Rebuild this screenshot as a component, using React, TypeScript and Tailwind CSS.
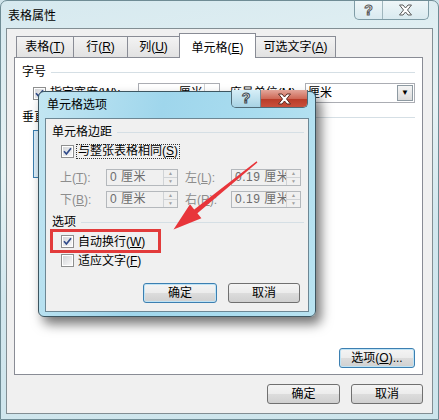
import React from "react";

function M({ c }: { c: string }) {
  return (
    <span>
      (<span className="underline underline-offset-1">{c}</span>)
    </span>
  );
}

function Check({ on }: { on?: boolean }) {
  return (
    <span className="w-[13px] h-[13px] shrink-0 border border-[#8e8f8f] bg-white p-px flex">
      <span className="flex-1 flex items-center justify-center bg-[linear-gradient(135deg,#d4d6d9,#f8f8f8)]">
        {on && (
          <svg width="9" height="9" viewBox="0 0 9 9">
            <path d="M1 4.3 L3.4 7 L8 1.2" stroke="#2f4a8a" strokeWidth="1.7" fill="none" />
          </svg>
        )}
      </span>
    </span>
  );
}

function Btn({ children, className }: { children: React.ReactNode; className: string }) {
  return (
    <div
      className={
        "h-[20px] rounded-[3px] border flex items-center justify-center bg-[linear-gradient(180deg,#f4f4f4_0%,#ececec_48%,#dcdcdc_52%,#d0d0d0_100%)] " +
        className
      }
    >
      {children}
    </div>
  );
}

function Spin({ value, className }: { value: string; className: string }) {
  return (
    <div className={"h-[17px] flex border border-[#b4b8bc] bg-[#f0f0f0] text-[#6d6d6d] " + className}>
      <span className="flex-1 min-w-0 pl-[3px] leading-[15px] tracking-[0.5px] whitespace-nowrap overflow-hidden">{value}</span>
      <span className="w-[14px] shrink-0 flex flex-col border-l border-[#d0d3d6]">
        <span className="flex-1 flex items-center justify-center text-[5px] leading-none text-[#a0a0a0] border-b border-[#d0d3d6]">▲</span>
        <span className="flex-1 flex items-center justify-center text-[5px] leading-none text-[#a0a0a0]">▼</span>
      </span>
    </div>
  );
}

function Header({ label, className }: { label: string; className: string }) {
  return (
    <div className={"h-[14px] flex items-center gap-[5px] leading-[14px] " + className}>
      <span>{label}</span>
      <span className="flex-1 h-px bg-[#d5dfe5]" />
    </div>
  );
}

function XGlyph({ fill, stroke }: { fill: string; stroke: string }) {
  return (
    <svg width="15" height="12" viewBox="0 0 15 12">
      <path
        d="M1.5 1 H5 L7.5 4 L10 1 H13.5 L9.5 6 L13.5 11 H10 L7.5 8 L5 11 H1.5 L5.5 6 Z"
        fill={fill}
        stroke={stroke}
        strokeWidth="1"
        strokeLinejoin="round"
      />
    </svg>
  );
}

export default function App() {
  return (
    <div className="relative w-[439px] h-[420px] overflow-hidden bg-[#cfe3ea] text-[12px] text-black font-['Liberation_Sans','Noto_Sans_CJK_SC',sans-serif]">
      {/* outer window */}
      <div className="h-full flex flex-col rounded-t-[7px] border border-[#6f8c95] bg-[linear-gradient(170deg,#d6e9ef_0%,#e6f2f4_35%,#d2e7ee_60%,#cde5ec_100%)] px-[5px] pb-[5px]">
        <div className="h-[27px] flex items-start justify-between">
          <span className="pl-[2px] pt-[8px] leading-[14px]">表格属性</span>
          <div className="mr-[4px] flex h-[19px] rounded-b-[5px] border border-t-0 border-[#7f9ca6] bg-[linear-gradient(180deg,#eef6f8,#d9eaef)] overflow-hidden">
            <div className="w-[28px] flex items-center justify-center border-r border-[#9fb6bd] text-[14px] font-bold text-white [-webkit-text-stroke:1px_#5a5a5a]">?</div>
            <div className="w-[45px] flex items-center justify-center">
              <XGlyph fill="#ffffff" stroke="#5a5a5a" />
            </div>
          </div>
        </div>

        {/* client */}
        <div className="flex-1 flex flex-col bg-[#f0f0f0] border border-[#828e93]">
          {/* tabs */}
          <div className="h-[28px] pl-[9px] flex items-end">
            <div className="w-[58px] h-[21px] border border-b-0 border-[#898c95] bg-[linear-gradient(180deg,#f3f3f3,#e2e2e2)] flex items-center justify-center">表格<M c="T" /></div>
            <div className="w-[55px] h-[21px] -ml-px border border-b-0 border-[#898c95] bg-[linear-gradient(180deg,#f3f3f3,#e2e2e2)] flex items-center justify-center">行<M c="R" /></div>
            <div className="w-[53px] h-[21px] -ml-px border border-b-0 border-[#898c95] bg-[linear-gradient(180deg,#f3f3f3,#e2e2e2)] flex items-center justify-center">列<M c="U" /></div>
            <div className="relative z-10 w-[77px] h-[25px] -ml-px -mb-px border border-b-0 border-[#898c95] bg-white flex items-start pt-[5px] justify-center">单元格<M c="E" /></div>
            <div className="w-[81px] h-[21px] -ml-px border border-b-0 border-[#898c95] bg-[linear-gradient(180deg,#f3f3f3,#e2e2e2)] flex items-center justify-center">可选文字<M c="A" /></div>
          </div>

          {/* panel */}
          <div className="ml-[7px] w-[409px] h-[318px] border border-[#898c95] bg-white flex flex-col">
            <Header label="字号" className="mt-[7px] ml-[7px] mr-[7px]" />
            <div className="mt-[4px] h-[20px] flex items-center">
              <span className="ml-[18px]"><Check on /></span>
              <span className="ml-[4px]">指定宽度<M c="W" />:</span>
              <div className="ml-[17px] w-[82px] h-[20px] flex border border-[#abadb3]">
                <span className="flex-1 pl-[40px] leading-[18px]">厘米</span>
                <span className="w-[15px] border-l border-[#d0d3d6]" />
              </div>
              <span className="ml-[10px]">度量单位<M c="M" />:</span>
              <div className="ml-[6px] w-[110px] h-[20px] flex border border-[#abadb3]">
                <span className="flex-1 pl-[2px] leading-[18px]">厘米</span>
                <span className="w-[16px] m-px flex items-center justify-center border border-[#8e9aa2] bg-[linear-gradient(180deg,#f5f5f5,#dcdcdc)] text-[8px]">▼</span>
              </div>
            </div>
            <Header label="垂直对齐方式" className="mt-[7px] ml-[7px] mr-[7px]" />
            <div className="mt-[6px] ml-[18px] flex gap-[10px]">
              <div className="w-[44px] h-[48px] border border-[#3c7fb1] bg-[#dbeefa]" />
              <div className="w-[44px] h-[48px] border border-[#adb2b5] bg-white" />
              <div className="w-[44px] h-[48px] border border-[#adb2b5] bg-white" />
            </div>
            <div className="mt-auto mb-[6px] mr-[7px] self-end">
              <Btn className="w-[76px] border-[#3c7fb1] shadow-[inset_0_0_0_1px_#bfe3f5]">
                选项<M c="O" />...
              </Btn>
            </div>
          </div>

          {/* bottom buttons */}
          <div className="mt-[9px] mr-[9px] flex justify-end gap-[11px]">
            <Btn className="w-[73px] border-[#707070]">确定</Btn>
            <Btn className="w-[72px] border-[#707070]">取消</Btn>
          </div>
        </div>
      </div>

      {/* inner dialog */}
      <div className="absolute left-[38px] top-[91px] w-[278px] h-[226px] flex flex-col rounded-[6px] border border-[#3d5661] bg-[linear-gradient(100deg,#c3e6f2_0%,#9fd6ec_40%,#a9dcef_70%,#b9e3f1_100%)] px-[6px] pb-[4px] shadow-[5px_7px_12px_rgba(0,0,0,0.55)]">
        <div className="h-[26px] flex items-start justify-between">
          <span className="pl-[2px] pt-[6px] leading-[14px]">单元格选项</span>
          <div className="-mt-[2px] mr-px flex h-[18px] rounded-b-[5px] border border-t-0 border-[#4f6b78] overflow-hidden">
            <div className="w-[29px] flex items-center justify-center border-r border-[#6f8b98] bg-[linear-gradient(180deg,#d6eef7,#a8d3e4)] text-[14px] font-bold text-white [-webkit-text-stroke:1px_#3d4a52]">?</div>
            <div className="w-[46px] flex items-center justify-center bg-[linear-gradient(180deg,#e3a79b_0%,#cf6a58_50%,#b83b28_52%,#c9503c_100%)]">
              <XGlyph fill="#ffffff" stroke="#5a2a22" />
            </div>
          </div>
        </div>
        <div className="flex-1 flex flex-col bg-[#f0f0f0] border border-[#6d8794]">
          <Header label="单元格边距" className="mt-[6px] ml-[6px] mr-[4px]" />
          <div className="mt-[5px] ml-[15px] h-[15px] flex items-center">
            <Check on />
            <span className="ml-[2px] px-[1px] border border-dotted border-[#333] leading-[13px]">
              与整张表格相同<M c="S" />
            </span>
          </div>
          <div className="mt-[10px] h-[17px] flex items-center text-[#8d8d8d]">
            <span className="w-[60px] pl-[14px]">上<M c="T" />:</span>
            <Spin value="0 厘米" className="w-[72px]" />
            <span className="w-[53px] pl-[7px]">左<M c="L" />:</span>
            <Spin value="0.19 厘米" className="w-[70px]" />
          </div>
          <div className="mt-[5px] h-[17px] flex items-center text-[#8d8d8d]">
            <span className="w-[60px] pl-[14px]">下<M c="B" />:</span>
            <Spin value="0 厘米" className="w-[72px]" />
            <span className="w-[53px] pl-[7px]">右<M c="R" />:</span>
            <Spin value="0.19 厘米" className="w-[70px]" />
          </div>
          <Header label="选项" className="mt-[7px] ml-[6px] mr-[4px]" />
          <div className="mt-[5px] ml-[15px] h-[15px] flex items-center">
            <Check on />
            <span className="ml-[4px]">自动换行<M c="W" /></span>
          </div>
          <div className="mt-[4px] ml-[15px] h-[15px] flex items-center">
            <Check />
            <span className="ml-[4px]">适应文字<M c="F" /></span>
          </div>
          <div className="mt-[15px] mr-[8px] flex justify-end gap-[11px]">
            <Btn className="w-[74px] border-[#3c7fb1] shadow-[inset_0_0_0_1px_#bfe3f5]">确定</Btn>
            <Btn className="w-[72px] border-[#707070]">取消</Btn>
          </div>
        </div>
      </div>

      {/* annotation: red box */}
      <div className="absolute left-[50px] top-[229px] w-[111px] h-[24px] border-[3px] border-[#e23b3b]" />

      {/* annotation: red arrow */}
      <svg className="absolute inset-0 pointer-events-none" width="439" height="420" viewBox="0 0 439 420">
        <polygon
          points="256.6,161.2 257.4,162.6 197.4,213.2 201.4,218.3 173.5,229.5 190,204.3 194.2,209.6"
          fill="#e8353a"
        />
      </svg>
    </div>
  );
}
